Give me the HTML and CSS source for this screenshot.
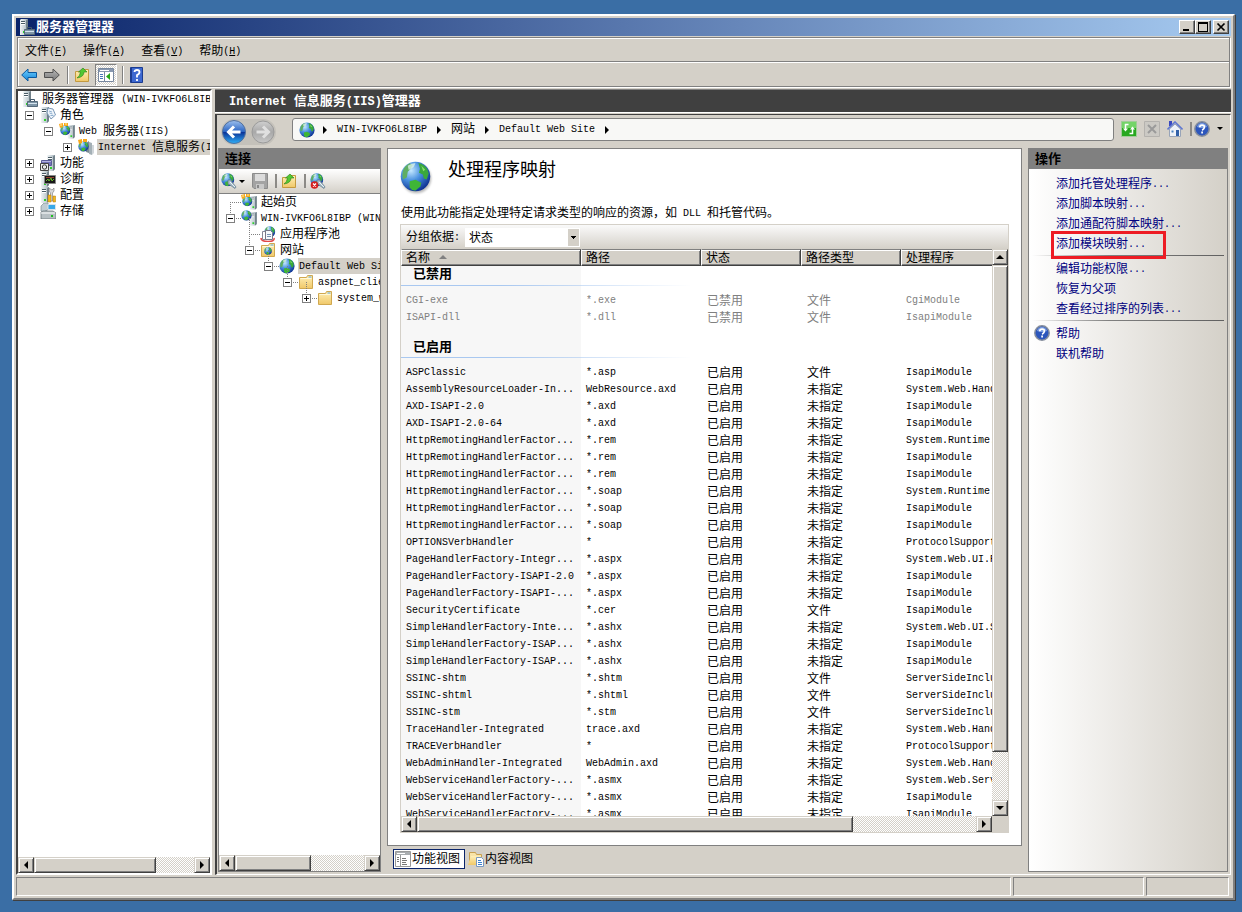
FILE: index.html
```html
<!DOCTYPE html>
<html lang="zh-CN">
<head>
<meta charset="utf-8">
<title>服务器管理器</title>
<link rel="stylesheet" href="styles.css">
</head>
<body>
<svg class="defs" aria-hidden="true">
  <defs>
    <linearGradient id="gTower" x1="0" x2="1"><stop offset="0" stop-color="#f0f4f5"/><stop offset=".6" stop-color="#c4cfd4"/><stop offset="1" stop-color="#9aa8b0"/></linearGradient>
    <radialGradient id="gGlobe" cx=".35" cy=".3" r=".75"><stop offset="0" stop-color="#c4e8ff"/><stop offset=".45" stop-color="#4a92e0"/><stop offset="1" stop-color="#0c2f90"/></radialGradient>
    <linearGradient id="gFolder" x1="0" y1="0" x2="0" y2="1"><stop offset="0" stop-color="#fff0b8"/><stop offset="1" stop-color="#f0c868"/></linearGradient>
    <linearGradient id="gBlue" x1="0" y1="0" x2="0" y2="1"><stop offset="0" stop-color="#6fd0ff"/><stop offset="1" stop-color="#1484d8"/></linearGradient>
    <linearGradient id="gArrow" x1="0" y1="0" x2="0" y2="1"><stop offset="0" stop-color="#b8b8b8"/><stop offset="1" stop-color="#787878"/></linearGradient>
    <linearGradient id="gRound" x1="0" y1="0" x2="0" y2="1"><stop offset="0" stop-color="#9dc0ee"/><stop offset=".48" stop-color="#2c66c4"/><stop offset=".52" stop-color="#0b3498"/><stop offset="1" stop-color="#2fb0f8"/></linearGradient>
    <linearGradient id="gGrey" x1="0" y1="0" x2="0" y2="1"><stop offset="0" stop-color="#d0d0d0"/><stop offset=".5" stop-color="#a8a8a8"/><stop offset="1" stop-color="#c8c8c8"/></linearGradient>
  </defs>
  <symbol id="tower" viewBox="0 0 16 16"><path d="M1 1l1-1h7v14l-2 2H1z" fill="url(#gTower)"/><path d="M7 1.500L9 0v14l-2 2z" fill="#71818a"/><path d="M2 2.500h4M2 4.500h4" stroke="#4a5c66"/><path d="M2 3.500h4M2 5.500h4" stroke="#fff"/><path d="M4 12h2v2H4z" fill="#2fd02f"/></symbol>
  <symbol id="globe" viewBox="0 0 16 16"><circle cx="8" cy="8" r="7.600" fill="url(#gGlobe)"/><path d="M1.500 5q1-2.500 3.500-3.800l1.500.8-1 2-1.500 1.500-.5 3-2 1q-.6-2 0-4.500z" fill="#5fae62"/><path d="M9.500 1q3 .5 4.500 3l.8 2.500-1 3-1.500-.5-.5-2-2-1 .5-2z" fill="#3aa83c"/><path d="M5 10.500l3-.8 3 1.500-.5 2-2.500 2q-2 .2-3-1.500z" fill="#3fb636"/><path d="M4 2.500q2-1.500 4-1.300l-1 2-2.500 1.500z" fill="#d8f0e8" opacity=".8"/><path d="M11 2.500l2 2-1 .8z" fill="#8be070"/></symbol>
  <symbol id="folder" viewBox="0 0 16 16"><path d="M1.500 3.500h7l1-2h5v13h-13z" fill="url(#gFolder)" stroke="#d0a850"/><path d="M10.500 3h3" stroke="#5aa8e8"/><path d="M2.500 4.500h11" stroke="#fff8d8"/></symbol>
  <symbol id="manager" viewBox="0 0 16 16"><use href="#tower"/><path d="M5.500 10.500h10v5h-10z" fill="#7f96a8" stroke="#566a7a"/><path d="M8.500 10V8.500h4V10" fill="none" stroke="#40566a"/><path d="M6 12.500h9" stroke="#d5e4ee"/></symbol>
  <symbol id="roles" viewBox="0 0 16 16"><use href="#tower"/><path d="M8 1l5 1 2.500 6-4.500 4-4-6z" fill="#eef4fa" stroke="#7d99b8"/><path d="M9 4l3 1M9.500 6l3 1M10.500 8.500h3" stroke="#8fb0d0"/></symbol>
  <symbol id="web" viewBox="0 0 16 16"><g transform="translate(8 2) scale(.86)"><use href="#tower" width="16" height="16"/></g><g transform="translate(1 2) scale(.66)"><use href="#globe" width="16" height="16"/></g><path d="M0 1l4-1v4L1 5zM5 0h4v3H5z" fill="#f8a81c"/><path d="M1 2h2M6 1h2" stroke="#fff0a0"/></symbol>
  <symbol id="site-server" viewBox="0 0 16 16"><g transform="translate(8 2) scale(.86)"><use href="#tower" width="16" height="16"/></g><g transform="scale(.68)"><use href="#globe" width="16" height="16"/></g></symbol>
  <symbol id="iis" viewBox="0 0 16 16"><path d="M8 4l3-2v12l-3-1z" fill="#7c8c94"/><path d="M11 3l3 1v12l-3-1z" fill="#a4b0b6"/><path d="M14 6h2v8l-2 2z" fill="#d0d6da"/><g transform="translate(0 2) scale(.68)"><use href="#globe" width="16" height="16"/></g><path d="M0 1l4-1v4L1 5zM5 0h4v3H5z" fill="#f8a81c"/></symbol>
  <symbol id="features" viewBox="0 0 16 16"><g transform="translate(6)"><use href="#tower" width="16" height="16"/></g><path d="M1.500 5.500h10v5h-10z" fill="#7472b8" stroke="#5a5a9a"/><path d="M2 6.500h9" stroke="#b4b2e0"/><path d="M.5 8.500h8v7h-8z" fill="#eee" stroke="#444"/><circle cx="4.500" cy="12" r="2.200" fill="none" stroke="#333"/></symbol>
  <symbol id="diag" viewBox="0 0 16 16"><use href="#tower"/><path d="M4.500 4.500h11v8h-11z" fill="#181818" stroke="#888"/><path d="M6 10l2-2 1 2 2-3 1 3 2-2" fill="none" stroke="#6ab830"/><path d="M6 6.500h8" stroke="#904030"/></symbol>
  <symbol id="config" viewBox="0 0 16 16"><use href="#tower"/><path d="M9 1v3l1.500 2v8h2V6L14 4V1l-2 2z" fill="#d8d8d8" stroke="#777" stroke-width=".6"/><path d="M8 8h3v7H8zM13 9h2.500v6H13z" fill="#f4b81c" stroke="#b07808" stroke-width=".5"/></symbol>
  <symbol id="storage" viewBox="0 0 16 16"><path d="M1 3l3-3h4l1 6-5 3-3-1z" fill="#c0ccd2" stroke="#708088" stroke-width=".6"/><path d="M8 1.500h7.500v5H8z" fill="#38a8e8" stroke="#d8e4ea"/><path d="M1 9l2-1h10l3 2v6H1z" fill="#b8c0c4" stroke="#606a70" stroke-width=".7"/><path d="M1 10h14" stroke="#fff"/><path d="M11 12h2v2h-2z" fill="#20c020"/></symbol>
  <symbol id="upfolder" viewBox="0 0 16 16"><path d="M1.500 4.500h6l1-2h6v12h-13z" fill="url(#gFolder)" stroke="#c49a40"/><path d="M3 11q3-2 3.500-6H4.500L9 1l4 4h-3q0 5-7 6z" fill="#52c832" stroke="#298018" stroke-width=".6"/></symbol>
  <symbol id="left" viewBox="0 0 16 16"><path d="M.7 8L7 2v3.500h8.500v5H7V14z" fill="url(#gBlue)" stroke="#0c5aa0"/></symbol>
  <symbol id="right" viewBox="0 0 16 16"><path d="M15.300 8L9 2v3.500H.5v5H9V14z" fill="url(#gArrow)" stroke="#505050"/></symbol>
  <symbol id="panel" viewBox="0 0 16 16"><path d="M.5 1.500h15v13H.5z" fill="#fff" stroke="#7888a0"/><path d="M1 2h14v3H1z" fill="#8898b0"/><path d="M2 3.500h9" stroke="#fff"/><path d="M6.500 5v10" stroke="#7888a0"/><path d="M2 7.500h3M2 9.500h3M2 11.500h3" stroke="#4878b8"/><path d="M12 6v7L8 9.500z" fill="#28a818"/></symbol>
  <symbol id="book" viewBox="0 0 16 16"><path d="M1.500.5h12v15h-12z" fill="#3d68d0" stroke="#1c3c90"/><path d="M2.500 1v14" stroke="#1c3c90"/><path d="M5.500 5q0-2 2.500-2t2.500 2-2.500 3V10.500M8 12v2" fill="none" stroke="#fff" stroke-width="1.800"/></symbol>
  <symbol id="connect" viewBox="0 0 16 16"><g transform="scale(.85)"><use href="#globe" width="16" height="16"/></g><path d="M7 7l3 0 1 2 4 5-1 1.500-5-3.500-2-1z" fill="#a8bcc8" stroke="#60788a" stroke-width=".7"/><path d="M9 9l5 5" stroke="#e8f4fa"/></symbol>
  <symbol id="disconnect" viewBox="0 0 16 16"><use href="#connect"/><circle cx="4.500" cy="12" r="3.800" fill="#d42020"/><path d="M3 10.500l3 3m0-3l-3 3" stroke="#fff" stroke-width="1.300"/></symbol>
  <symbol id="save" viewBox="0 0 16 16"><path d="M.5.500h15v15H2l-1.500-1.500z" fill="#a3a3a3" stroke="#8c8c8c"/><path d="M3 1h10v7H3z" fill="#dcdcdc"/><path d="M4 11h8v5H4z" fill="#c8c8c8"/><path d="M5 12h2v3H5z" fill="#888"/></symbol>
  <symbol id="pools" viewBox="0 0 16 16"><g transform="translate(4) scale(.72)"><use href="#globe" width="16" height="16"/></g><path d="M1 12q0 3.500 7 3.500t6-3.500" fill="none" stroke="#e04848" stroke-width="1.500"/><path d="M2.500 5.500h7v8h-7z" fill="#fff" stroke="#889"/><path d="M5.500 4.500h5l2 2v7h-7z" fill="#f4f8fc" stroke="#778"/><path d="M7 8.500h4M7 10.500h4" stroke="#7890b0"/></symbol>
  <symbol id="sites" viewBox="0 0 16 16"><use href="#folder"/><g transform="translate(4 5) scale(.5)"><use href="#globe" width="16" height="16"/></g></symbol>
  <symbol id="refresh" viewBox="0 0 16 16"><path d="M.5.500h15v15H.5z" fill="#28a820" stroke="#a0cc98"/><path d="M1 1h14v6H1z" fill="#74d468"/><path d="M7.500 3.500H4.500V8M8.500 12.500h3V8" fill="none" stroke="#fff" stroke-width="1.500"/><path d="M2 7.500h5L4.500 10.500zM9 8.500h5L11.500 5.500z" fill="#fff"/></symbol>
  <symbol id="stop" viewBox="0 0 16 16"><path d="M.5.500h15v15H.5z" fill="#cbc9c4" stroke="#b4b2ae"/><path d="M4 4l8 8m0-8l-8 8" stroke="#9a9a9a" stroke-width="2"/></symbol>
  <symbol id="home" viewBox="0 0 16 16"><path d="M2 0h3v5H2z" fill="#3848c0"/><path d="M2.500 8L8 3l5.500 5v7.500h-11z" fill="#eef2f8" stroke="#98a4b8"/><path d="M.5 8.500L8 1l7.500 7.500" fill="none" stroke="#6078d0" stroke-width="1.600"/><path d="M9 9h3v6H9z" fill="#3060a8"/><path d="M4.500 9.500h2v2h-2z" fill="#4880c0"/></symbol>
  <symbol id="help" viewBox="0 0 16 16"><circle cx="8" cy="8" r="7.200" fill="#2c56bc" stroke="#868e9c" stroke-width="1.500"/><path d="M3 6q1-4 5-4t5 4q-5 2-10 0z" fill="#7c9ee0"/><path d="M5.800 6.300q0-2.200 2.300-2.200t2.300 2-2.300 3.200M8.100 10.500v2" fill="none" stroke="#fff" stroke-width="1.700"/></symbol>
  <symbol id="features-view" viewBox="0 0 16 16"><path d="M.5.500h15v15H.5z" fill="#fff" stroke="#999"/><path d="M1 1h14v3H1z" fill="#a9adb0"/><path d="M2 2.500h8" stroke="#fff"/><path d="M5.500 4v11" stroke="#999"/><path d="M2 6.500h2M2 8.500h2M2 10.500h2M7 7.500h4M7 9.500h5M7 11.500h4M7 13.500h5" stroke="#777"/></symbol>
  <symbol id="content-view" viewBox="0 0 16 16"><path d="M1.500 1.500h6l1 2h5v10h-12z" fill="#f8e4a8" stroke="#c8a050"/><path d="M3 5h10l-3 9H0z" fill="url(#gFolder)"/><path d="M8.500 6.500h5l2 2v7h-7z" fill="#fff" stroke="#7898c0"/><path d="M10 9.500h3M10 11.500h4M10 13.500h4" stroke="#3880d0"/></symbol>
</svg>

<main class="window">
  <header class="titlebar">
    <svg class="ico"><use href="#manager"/></svg>
    <h1>服务器管理器</h1>
    <div class="winbtns">
      <button aria-label="最小化"><svg viewBox="0 0 12 10"><path d="M2 7h6v2H2z"/></svg></button>
      <button aria-label="最大化"><svg viewBox="0 0 12 10"><path d="M1 0h10v10H1zm1 2v7h8V2z" fill-rule="evenodd"/></svg></button>
      <button class="close" aria-label="关闭"><svg viewBox="0 0 12 10"><path d="M2.500 1.500l7 7m0-7l-7 7" stroke="#000" stroke-width="1.700"/></svg></button>
    </div>
  </header>

  <div class="bars">
    <nav class="menubar">
      <button><span>文件<span class="m">(<u>F</u>)</span></span></button>
      <button><span>操作<span class="m">(<u>A</u>)</span></span></button>
      <button><span>查看<span class="m">(<u>V</u>)</span></span></button>
      <button><span>帮助<span class="m">(<u>H</u>)</span></span></button>
    </nav>
    <div class="toolbar">
      <button aria-label="后退"><svg class="ico"><use href="#left"/></svg></button>
      <button aria-label="前进"><svg class="ico"><use href="#right"/></svg></button>
      <i class="sep"></i>
      <button aria-label="向上"><svg class="ico"><use href="#upfolder"/></svg></button>
      <button class="pressed" aria-label="显示操作窗格"><svg class="ico"><use href="#panel"/></svg></button>
      <i class="sep"></i>
      <button aria-label="帮助"><svg class="ico"><use href="#book"/></svg></button>
    </div>
  </div>

  <div class="split">
    <section class="server-pane">
      <ul class="tree">
        <li class="l0"><svg class="ico"><use href="#manager"/></svg><span>服务器管理器 <span class="m">(WIN-IVKFO6L8IBP)</span></span></li>
        <li class="l1"><button class="tw minus" aria-label="折叠"></button><svg class="ico"><use href="#roles"/></svg><span>角色</span></li>
        <li class="l2"><button class="tw minus" aria-label="折叠"></button><svg class="ico"><use href="#web"/></svg><span><span class="m">Web </span>服务器<span class="m">(IIS)</span></span></li>
        <li class="l3"><button class="tw plus" aria-label="展开"></button><svg class="ico"><use href="#iis"/></svg><span class="sel"><span class="m">Internet </span>信息服务<span class="m">(IIS)</span></span></li>
        <li class="l1"><button class="tw plus" aria-label="展开"></button><svg class="ico"><use href="#features"/></svg><span>功能</span></li>
        <li class="l1"><button class="tw plus" aria-label="展开"></button><svg class="ico"><use href="#diag"/></svg><span>诊断</span></li>
        <li class="l1"><button class="tw plus" aria-label="展开"></button><svg class="ico"><use href="#config"/></svg><span>配置</span></li>
        <li class="l1"><button class="tw plus" aria-label="展开"></button><svg class="ico"><use href="#storage"/></svg><span>存储</span></li>
      </ul>
      <div class="hscroll"><button class="al" aria-label="向左"></button><div class="track"><div class="thumb w76"></div></div><button class="ar" aria-label="向右"></button></div>
    </section>

    <section class="iis">
      <h2><span class="mb">Internet </span>信息服务<span class="mb">(IIS)</span>管理器</h2>
      <div class="iis-body">
        <div class="navrow">
          <div class="navpill">
            <button aria-label="后退"><svg viewBox="0 0 24 24"><circle cx="12" cy="12" r="11.500" fill="url(#gRound)" stroke="#52709c"/><path d="M12 6.500L6.500 12l5.500 5.500M7 12h11.500" fill="none" stroke="#fff" stroke-width="3"/></svg></button>
            <button aria-label="前进"><svg viewBox="0 0 24 24"><circle cx="12" cy="12" r="11" fill="url(#gGrey)" stroke="#9a9a9a"/><path d="M12 6.500l5.500 5.500-5.500 5.500M17 12H5.500" fill="none" stroke="#e0e0e0" stroke-width="3"/></svg></button>
          </div>
          <nav class="address">
            <svg class="ico"><use href="#globe"/></svg><i class="crumb"></i>
            <a href="#" class="m">WIN-IVKFO6L8IBP</a><i class="crumb"></i>
            <a href="#">网站</a><i class="crumb"></i>
            <a href="#" class="m">Default Web Site</a><i class="crumb"></i>
          </nav>
          <div class="navtools">
            <button aria-label="刷新"><svg class="ico"><use href="#refresh"/></svg></button>
            <button aria-label="停止"><svg class="ico"><use href="#stop"/></svg></button>
            <button aria-label="主页"><svg class="ico"><use href="#home"/></svg></button>
            <i class="bar"></i>
            <button class="helpbtn" aria-label="帮助"><svg class="ico"><use href="#help"/></svg><i class="caret"></i></button>
          </div>
        </div>

        <div class="cols">
          <section class="conn">
            <h3>连接</h3>
            <div class="conn-tools">
              <button aria-label="连接"><svg class="ico"><use href="#connect"/></svg><i class="caret"></i></button>
              <button aria-label="保存"><svg class="ico"><use href="#save"/></svg></button>
              <i class="bar"></i>
              <button aria-label="向上"><svg class="ico"><use href="#upfolder"/></svg></button>
              <i class="bar"></i>
              <button aria-label="断开"><svg class="ico"><use href="#disconnect"/></svg></button>
            </div>
            <ul class="tree dotted">
              <li class="l1 leaf first"><i class="tw-gap"></i><svg class="ico"><use href="#web"/></svg><span>起始页</span></li>
              <li class="l1"><button class="tw minus" aria-label="折叠"></button><svg class="ico"><use href="#site-server"/></svg><span class="m">WIN-IVKFO6L8IBP (WIN-IVKFO6L8IBP)</span></li>
              <li class="l2 leaf"><i class="tw-gap"></i><svg class="ico"><use href="#pools"/></svg><span>应用程序池</span></li>
              <li class="l2"><button class="tw minus" aria-label="折叠"></button><svg class="ico"><use href="#sites"/></svg><span>网站</span></li>
              <li class="l3"><button class="tw minus" aria-label="折叠"></button><svg class="ico"><use href="#globe"/></svg><span class="sel m">Default Web Site</span></li>
              <li class="l4"><button class="tw minus" aria-label="折叠"></button><svg class="ico"><use href="#folder"/></svg><span class="m">aspnet_client</span></li>
              <li class="l5"><button class="tw plus" aria-label="展开"></button><svg class="ico"><use href="#folder"/></svg><span class="m">system_web</span></li>
            </ul>
            <div class="hscroll"><button class="al" aria-label="向左"></button><div class="track"><div class="thumb w59"></div></div><button class="ar" aria-label="向右"></button></div>
          </section>

          <div class="center">
            <section class="feature">
              <div class="feature-head"><svg class="big"><use href="#globe"/></svg><h3>处理程序映射</h3></div>
              <p>使用此功能指定处理特定请求类型的响应的资源，如<span class="m"> DLL </span>和托管代码。</p>
              <div class="grid">
                <div class="groupbar">
                  <label for="group">分组依据<span class="m">:</span></label>
                  <span class="combo"><select id="group"><option>状态</option></select></span>
                </div>
                <div class="list">
                  <div class="viewport">
                    <table>
                      <colgroup><col class="c180"><col class="c120"><col class="c100"><col class="c100"><col class="c180"></colgroup>
                      <thead><tr><th>名称<i class="sort"></i></th><th>路径</th><th>状态</th><th>路径类型</th><th>处理程序</th></tr></thead>
                      <tbody class="off">
                        <tr class="group top"><th colspan="5">已禁用</th></tr>
                        <tr><td>CGI-exe</td><td>*.exe</td><td>已禁用</td><td>文件</td><td>CgiModule</td></tr>
                        <tr><td>ISAPI-dll</td><td>*.dll</td><td>已禁用</td><td>文件</td><td>IsapiModule</td></tr>
                      </tbody>
                      <tbody>
                        <tr class="group"><th colspan="5">已启用</th></tr>
                        <tr><td>ASPClassic</td><td>*.asp</td><td>已启用</td><td>文件</td><td>IsapiModule</td></tr>
                        <tr><td>AssemblyResourceLoader-In...</td><td>WebResource.axd</td><td>已启用</td><td>未指定</td><td>System.Web.Handlers</td></tr>
                        <tr><td>AXD-ISAPI-2.0</td><td>*.axd</td><td>已启用</td><td>未指定</td><td>IsapiModule</td></tr>
                        <tr><td>AXD-ISAPI-2.0-64</td><td>*.axd</td><td>已启用</td><td>未指定</td><td>IsapiModule</td></tr>
                        <tr><td>HttpRemotingHandlerFactor...</td><td>*.rem</td><td>已启用</td><td>未指定</td><td>System.Runtime.Remoting</td></tr>
                        <tr><td>HttpRemotingHandlerFactor...</td><td>*.rem</td><td>已启用</td><td>未指定</td><td>IsapiModule</td></tr>
                        <tr><td>HttpRemotingHandlerFactor...</td><td>*.rem</td><td>已启用</td><td>未指定</td><td>IsapiModule</td></tr>
                        <tr><td>HttpRemotingHandlerFactor...</td><td>*.soap</td><td>已启用</td><td>未指定</td><td>System.Runtime.Remoting</td></tr>
                        <tr><td>HttpRemotingHandlerFactor...</td><td>*.soap</td><td>已启用</td><td>未指定</td><td>IsapiModule</td></tr>
                        <tr><td>HttpRemotingHandlerFactor...</td><td>*.soap</td><td>已启用</td><td>未指定</td><td>IsapiModule</td></tr>
                        <tr><td>OPTIONSVerbHandler</td><td>*</td><td>已启用</td><td>未指定</td><td>ProtocolSupportModule</td></tr>
                        <tr><td>PageHandlerFactory-Integr...</td><td>*.aspx</td><td>已启用</td><td>未指定</td><td>System.Web.UI.Page</td></tr>
                        <tr><td>PageHandlerFactory-ISAPI-2.0</td><td>*.aspx</td><td>已启用</td><td>未指定</td><td>IsapiModule</td></tr>
                        <tr><td>PageHandlerFactory-ISAPI-...</td><td>*.aspx</td><td>已启用</td><td>未指定</td><td>IsapiModule</td></tr>
                        <tr><td>SecurityCertificate</td><td>*.cer</td><td>已启用</td><td>文件</td><td>IsapiModule</td></tr>
                        <tr><td>SimpleHandlerFactory-Inte...</td><td>*.ashx</td><td>已启用</td><td>未指定</td><td>System.Web.UI.Simple</td></tr>
                        <tr><td>SimpleHandlerFactory-ISAP...</td><td>*.ashx</td><td>已启用</td><td>未指定</td><td>IsapiModule</td></tr>
                        <tr><td>SimpleHandlerFactory-ISAP...</td><td>*.ashx</td><td>已启用</td><td>未指定</td><td>IsapiModule</td></tr>
                        <tr><td>SSINC-shtm</td><td>*.shtm</td><td>已启用</td><td>文件</td><td>ServerSideIncludeModule</td></tr>
                        <tr><td>SSINC-shtml</td><td>*.shtml</td><td>已启用</td><td>文件</td><td>ServerSideIncludeModule</td></tr>
                        <tr><td>SSINC-stm</td><td>*.stm</td><td>已启用</td><td>文件</td><td>ServerSideIncludeModule</td></tr>
                        <tr><td>TraceHandler-Integrated</td><td>trace.axd</td><td>已启用</td><td>未指定</td><td>System.Web.Handlers</td></tr>
                        <tr><td>TRACEVerbHandler</td><td>*</td><td>已启用</td><td>未指定</td><td>ProtocolSupportModule</td></tr>
                        <tr><td>WebAdminHandler-Integrated</td><td>WebAdmin.axd</td><td>已启用</td><td>未指定</td><td>System.Web.Handlers</td></tr>
                        <tr><td>WebServiceHandlerFactory-...</td><td>*.asmx</td><td>已启用</td><td>未指定</td><td>System.Web.Services</td></tr>
                        <tr><td>WebServiceHandlerFactory-...</td><td>*.asmx</td><td>已启用</td><td>未指定</td><td>IsapiModule</td></tr>
                        <tr><td>WebServiceHandlerFactory-...</td><td>*.asmx</td><td>已启用</td><td>未指定</td><td>IsapiModule</td></tr>
                      </tbody>
                    </table>
                  </div>
                  <div class="vscroll"><button class="au" aria-label="向上"></button><div class="track"><div class="thumb h91"></div></div><button class="ad" aria-label="向下"></button></div>
                  <div class="hscroll"><button class="al" aria-label="向左"></button><div class="track"><div class="thumb w78"></div></div><button class="ar" aria-label="向右"></button></div>
                </div>
              </div>
            </section>
            <div class="views">
              <button class="on"><svg class="ico"><use href="#features-view"/></svg><span>功能视图</span></button>
              <button><svg class="ico"><use href="#content-view"/></svg><span>内容视图</span></button>
            </div>
          </div>

          <aside class="actions">
            <h3>操作</h3>
            <ul>
              <li><a href="#">添加托管处理程序<span class="m">...</span></a></li>
              <li><a href="#">添加脚本映射<span class="m">...</span></a></li>
              <li><a href="#">添加通配符脚本映射<span class="m">...</span></a></li>
              <li class="marked"><a href="#">添加模块映射<span class="m">...</span></a></li>
            </ul>
            <hr>
            <ul>
              <li><a href="#">编辑功能权限<span class="m">...</span></a></li>
              <li><a href="#">恢复为父项</a></li>
              <li><a href="#">查看经过排序的列表<span class="m">...</span></a></li>
            </ul>
            <hr>
            <ul>
              <li class="withicon"><svg class="ico"><use href="#help"/></svg><a href="#">帮助</a></li>
              <li><a href="#">联机帮助</a></li>
            </ul>
          </aside>
        </div>
      </div>
    </section>
  </div>

  <footer class="status"><div></div><div></div><div></div></footer>
</main>
</body>
</html>
```
FILE: styles.css
```css
:root {
  --face: #d4d0c8;
  --shade: #808080;
  --dark: #404040;
}
*, *::before, *::after { box-sizing: border-box; }
body {
  margin: 0;
  height: 100vh;
  padding: 14px 7px 12px 12px;
  background: #3a6ea5;
  color: #000;
  font: 12px/16px "Liberation Mono", "Noto Sans CJK SC", monospace;
  white-space: nowrap;
  overflow: hidden;
}
h1, h2, h3, p, ul { margin: 0; padding: 0; }
ul { list-style: none; }
a { color: inherit; text-decoration: none; }
button {
  font: inherit;
  color: inherit;
  background: none;
  border: 0;
  padding: 0;
  display: flex;
  align-items: center;
}
.defs { position: absolute; width: 0; height: 0; }
.ico { width: 16px; height: 16px; flex: none; display: block; }
.m { font-size: 10px; white-space: pre; vertical-align: 1px; }
.mb { white-space: pre; font-size: 12px; }

.window {
  height: 100%;
  display: flex;
  flex-direction: column;
  background: var(--face);
  padding: 2px;
  border: 2px solid;
  border-color: #fff var(--shade) var(--shade) #fff;
  box-shadow: inset -1px -1px 0 var(--face), 1px 1px 0 var(--dark);
}

.titlebar {
  height: 18px;
  display: flex;
  align-items: center;
  padding: 0 2px 0 3px;
  gap: 1px;
  color: #fff;
  background: linear-gradient(90deg, #0a246a, #a6caf0);
}
.titlebar h1 { flex: 1; padding-top: 2px; font-size: 13px; line-height: 18px; }
.winbtns { display: flex; }
.winbtns button {
  width: 16px;
  height: 14px;
  justify-content: center;
  background: var(--face);
  border: 1px solid;
  border-color: #fff var(--dark) var(--dark) #fff;
  box-shadow: inset -1px -1px 0 var(--shade);
}
.winbtns svg { width: 12px; height: 10px; }
.winbtns .close { margin-left: 2px; }

.bars {
  margin: 1px 1px 2px;
  border: 1px solid var(--shade);
  box-shadow: 1px 1px 0 #fff;
}
.menubar, .toolbar {
  display: flex;
  align-items: center;
  height: 24px;
  border-top: 1px solid #fff;
  border-left: 1px solid #fff;
}
.menubar { gap: 16px; padding-left: 6px; border-bottom: 1px solid var(--shade); }
.menubar button { padding-top: 3px; }
.toolbar { gap: 3px; }
.toolbar button { padding: 2px; }
.toolbar .pressed {
  border: 1px solid;
  border-color: var(--shade) #fff #fff var(--shade);
  background: repeating-conic-gradient(#fff 0 25%, #d4d0c8 0 50%) 0 0 / 2px 2px;
}
.sep {
  width: 2px;
  height: 18px;
  margin: 0 0 0 2px;
  background: linear-gradient(90deg, var(--shade) 50%, #fff 50%);
}

.split {
  flex: 1;
  min-height: 0;
  display: grid;
  grid-template-columns: 196px 1fr;
  gap: 3px;
}
.server-pane {
  display: flex;
  flex-direction: column;
  min-width: 0;
  background: #fff;
  border: 2px solid;
  border-color: var(--dark) #fff #fff var(--dark);
  overflow: hidden;
}
.tree { flex: 1; min-height: 0; overflow: hidden; }
.tree li { height: 16px; display: flex; align-items: center; gap: 4px; position: relative; }
.tree li > span { padding-top: 2px; }
.l0 { padding-left: 4px; }
.l1 { padding-left: 7px; }
.l2 { padding-left: 26px; }
.l3 { padding-left: 45px; }
.l4 { padding-left: 64px; }
.l5 { padding-left: 83px; }
.tree .sel { background: var(--face); align-self: stretch; margin-left: -1px; padding: 1px 4px 0 1px; }
.tw, .tw-gap { width: 9px; height: 9px; flex: none; margin-right: 2px; }
.tw {
  border: 1px solid var(--shade);
  background: linear-gradient(#000, #000) center / 5px 1px no-repeat, #fff;
  z-index: 1;
}
.tw.plus {
  background: linear-gradient(#000, #000) center / 5px 1px no-repeat, linear-gradient(#000, #000) center / 1px 5px no-repeat, #fff;
}
.dotted li::before {
  content: "";
  flex: none;
  width: 12px;
  height: 1px;
  margin: 0 -16px 0 4px;
  background: repeating-linear-gradient(90deg, var(--shade) 0 1px, transparent 1px 2px);
}
.dotted .tw, .dotted .tw-gap { margin-left: -4px; }
.dotted li::after {
  content: "";
  position: absolute;
  top: -8px;
  height: 16px;
  width: 1px;
  margin-left: 4px;
  background: repeating-linear-gradient(var(--shade) 0 1px, transparent 1px 2px);
}
.dotted .first::after { display: none; }

.hscroll, .vscroll { display: flex; }
.hscroll { height: 16px; }
.vscroll { width: 16px; flex-direction: column; }
.hscroll button, .vscroll button, .thumb {
  width: 16px;
  height: 16px;
  flex: none;
  justify-content: center;
  background: var(--face);
  border: 1px solid;
  border-color: var(--face) var(--dark) var(--dark) var(--face);
  box-shadow: inset 1px 1px 0 #fff, inset -1px -1px 0 var(--shade);
}
.track {
  flex: 1;
  min-width: 0;
  min-height: 0;
  background: repeating-conic-gradient(#fff 0 25%, #d4d0c8 0 50%) 0 0 / 2px 2px;
}
.hscroll .w76 { width: 76%; }
.hscroll .w59 { width: 59%; }
.hscroll .w78 { width: 78%; }
.vscroll .h91 { height: 91%; }
.al::before, .ar::before, .au::before, .ad::before { content: ""; border: 4px solid transparent; }
.al::before { border-width: 4px 4px 4px 0; border-right-color: #000; }
.ar::before { border-width: 4px 0 4px 4px; border-left-color: #000; }
.au::before { border-width: 0 4px 4px; border-bottom-color: #000; }
.ad::before { border-width: 4px 4px 0; border-top-color: #000; }

.iis { display: flex; flex-direction: column; min-width: 0; min-height: 0; }
.iis h2 {
  height: 24px;
  margin-bottom: 1px;
  padding-left: 14px;
  background: var(--dark);
  border-top: 1px solid var(--shade);
  border-bottom: 1px solid #fff;
  color: #fff;
  font-size: 13px;
  line-height: 24px;
}
.iis-body {
  flex: 1;
  min-height: 0;
  display: flex;
  flex-direction: column;
  border: solid;
  border-width: 1px 1px 1px 2px;
  border-color: var(--dark) #fff #fff var(--dark);
  padding: 0 2px 2px 1px;
}
.navrow { height: 33px; display: flex; align-items: center; padding: 0 4px 0 3px; }
.navpill { display: flex; gap: 5px; padding: 1px; border-radius: 14px; background: #c4c1ba; }
.navpill svg { width: 24px; height: 24px; display: block; }
.address {
  flex: 1;
  min-width: 0;
  height: 23px;
  margin: 0 7px 4px 16px;
  padding: 0 6px;
  display: flex;
  align-items: center;
  border: 1px solid var(--shade);
  border-radius: 3px;
  background: #f8f8f6;
}
.address .ico { margin-right: -2px; }
.address a { padding-top: 1px; }
.crumb { width: 24px; display: flex; justify-content: center; }
.crumb::before { content: ""; border: solid transparent; border-width: 4px 0 4px 4px; border-left-color: #000; }
.navtools { display: flex; align-items: center; gap: 7px; margin-bottom: 6px; }
.navtools .bar { margin: 0 -5px 0 0; }
.bar { width: 2px; height: 14px; background: #8c8a86; }
.caret { border: solid transparent; border-width: 3px 3px 0; border-top-color: #000; }
.helpbtn { gap: 7px; }
.helpbtn .caret { margin-right: 1px; }

.cols {
  flex: 1;
  min-height: 0;
  display: grid;
  grid-template-columns: 163px 1fr 200px;
  gap: 6px;
}
.conn h3, .actions h3 {
  height: 21px;
  padding-left: 6px;
  background: var(--shade);
  font-size: 13px;
  line-height: 23px;
}
.conn {
  display: flex;
  flex-direction: column;
  min-width: 0;
  min-height: 0;
  border: solid var(--shade);
  border-width: 0 1px 1px;
  background: #fff;
}
.conn-tools {
  height: 25px;
  display: flex;
  align-items: center;
  gap: 7px;
  padding-left: 2px;
  background: linear-gradient(#fff, var(--face));
  border-bottom: 1px solid var(--shade);
}
.conn-tools button { gap: 2px; }
.conn-tools .bar { margin: 0 -3px 0 0; }

.center { display: flex; flex-direction: column; min-width: 0; min-height: 0; }
.feature {
  flex: 1;
  min-height: 0;
  display: flex;
  flex-direction: column;
  padding: 12px;
  background: #fff;
  border: 1px solid var(--shade);
}
.feature-head { display: flex; gap: 17px; height: 43px; }
.big { width: 31px; height: 31px; filter: drop-shadow(1px 2px 1px #bbb); }
.feature-head h3 { font-size: 18px; line-height: 20px; font-weight: 400; }
.feature p { height: 20px; padding: 2px 0 0 1px; }
.grid { flex: 1; min-height: 0; display: flex; flex-direction: column; border: 1px solid var(--face); }
.groupbar {
  height: 24px;
  display: flex;
  align-items: center;
  gap: 5px;
  padding-left: 5px;
  background: linear-gradient(#fafafa, var(--face));
}
.groupbar label { padding-top: 2px; }
.combo { display: flex; width: 115px; height: 19px; padding: 1px; background: #fff; }
.combo::after {
  content: "";
  width: 11px;
  background: linear-gradient(#000, #000) center 7px / 5px 1px no-repeat, linear-gradient(#000, #000) center 8px / 3px 1px no-repeat, linear-gradient(#000, #000) center 9px / 1px 1px no-repeat, var(--face);
}
.combo select { flex: 1; appearance: none; border: 0; background: none; font: inherit; color: inherit; padding: 2px 0 0 3px; }
.list {
  flex: 1;
  min-height: 0;
  display: grid;
  grid-template-columns: 1fr 16px;
  grid-template-rows: 1fr 16px;
  background: var(--face);
}
.viewport { overflow: hidden; min-height: 0; background: linear-gradient(90deg, #f7f7f7 180px, #fff 180px); }
table { table-layout: fixed; border-collapse: separate; border-spacing: 0; width: 680px; }
.c180 { width: 180px; }
.c120 { width: 120px; }
.c100 { width: 100px; }
thead th {
  height: 17px;
  padding: 4px 5px 0 4px;
  text-align: left;
  font-weight: 400;
  line-height: 11px;
  background: var(--face);
  border: 1px solid;
  border-color: var(--shade) var(--dark) var(--dark) #fff;
  box-shadow: inset 0 1px 0 #fff, inset -1px -1px 0 var(--shade);
}
.sort { display: inline-block; margin-left: 9px; border: solid transparent; border-width: 0 4px 4px; border-bottom-color: var(--shade); vertical-align: 3px; }
td { height: 17px; padding: 0 0 0 5px; font-size: 10px; line-height: 17px; overflow: hidden; }
td:nth-child(3), td:nth-child(4) { font-size: 12px; line-height: 14px; padding: 3px 0 0 6px; }
.off td { color: var(--shade); }
.group th {
  height: 38px;
  padding: 6px 12px 0;
  text-align: left;
  font-size: 13px;
  line-height: 32px;
  vertical-align: top;
  background: linear-gradient(90deg, #a9c8f0 100px, transparent 290px) 0 31px / 100% 1px no-repeat;
}
.group.top th { height: 26px; padding-top: 1px; line-height: 16px; background-position-y: 19px; }

.views { display: flex; align-items: center; gap: 3px; height: 26px; padding-left: 6px; }
.views button { height: 20px; gap: 1px; }
.views span { padding-top: 2px; }
.views .on { padding: 0 4px 0 1px; background: #fff; border: 1px solid #0a246a; }

.actions {
  min-width: 0;
  border: solid var(--shade);
  border-width: 0 1px 1px;
  background: linear-gradient(90deg, #fff, var(--face));
}
.actions h3 { margin-bottom: 4px; }
.actions li { display: flex; align-items: center; height: 20px; padding-left: 27px; color: #000080; position: relative; }
.actions a { padding-top: 3px; }
.actions .withicon { padding-left: 5px; gap: 6px; }
.actions hr { height: 1px; margin: 2px 3px; border: 0; background: linear-gradient(90deg, transparent, var(--shade) 40%, #606060); }
.marked::after {
  content: "";
  position: absolute;
  left: 22px;
  top: -2px;
  width: 115px;
  height: 28px;
  border: 3px solid #ed1c24;
}

.status { display: grid; grid-template-columns: 1fr 131px 83px; gap: 2px; height: 21px; padding: 2px 2px 0 0; }
.status div { border: 1px solid; border-color: var(--shade) #fff #fff var(--shade); }
```
